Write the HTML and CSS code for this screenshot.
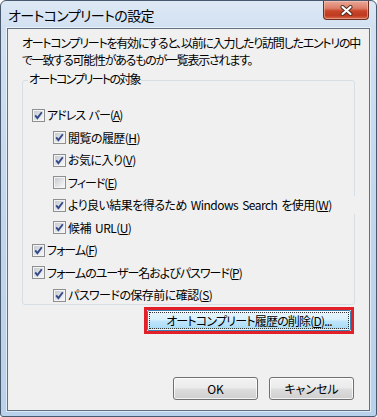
FILE: index.html
```html
<!DOCTYPE html>
<html lang="ja">
<head>
    <meta charset="UTF-8">
    <meta name="viewport" content="width=device-width, initial-scale=1.0">
    <title>オートコンプリートの設定</title>
    <link rel="stylesheet" href="styles.css">
</head>
<body>

    <svg class="defs" width="0" height="0">
        <defs>
            <linearGradient id="box-fill" x1="0" y1="0" x2="1" y2="1">
                <stop offset="0" stop-color="#c6cbd2"/>
                <stop offset="1" stop-color="#f7f7f7"/>
            </linearGradient>
            <symbol id="box" viewBox="0 0 13 13">
                <rect x="0.5" y="0.5" width="12" height="12" fill="#f4f4f4" stroke="#8e8f8f"/>
                <rect x="2" y="2" width="9" height="9" fill="url(#box-fill)"/>
            </symbol>
            <symbol id="box-checked" viewBox="0 0 13 13">
                <use href="#box"/>
                <path d="M3.2 6.4 L5.4 9.1 L9.8 3.3" fill="none" stroke="#34498a" stroke-width="1.9"/>
            </symbol>
        </defs>
    </svg>

    <div class="window">
        <div class="titlebar">
            <span class="title">オートコンプリートの設定</span>
            <span class="close">
                <svg width="13" height="11" viewBox="0 0 13 11">
                    <path d="M2.5 2 L10.5 9 M10.5 2 L2.5 9" stroke="#4a2a22" stroke-width="4" stroke-linecap="round"/>
                    <path d="M2.5 2 L10.5 9 M10.5 2 L2.5 9" stroke="#ffffff" stroke-width="2.2" stroke-linecap="round"/>
                </svg>
            </span>
        </div>

        <div class="client">
            <p class="desc">オートコンプリートを有効にすると、以前に入力したり訪問したエントリの中<br>で一致する可能性があるものが一覧表示されます。</p>

            <div class="group">
                <span class="group-title">オートコンプリートの対象</span>
                <ul class="options">
                    <li class="opt"><svg class="cb"><use href="#box-checked"/></svg><span class="kana">アドレス バー(<u>A</u>)</span></li>
                    <li class="opt sub"><svg class="cb"><use href="#box-checked"/></svg><span>閲覧の履歴(<u>H</u>)</span></li>
                    <li class="opt sub"><svg class="cb"><use href="#box-checked"/></svg><span>お気に入り(<u>V</u>)</span></li>
                    <li class="opt sub"><svg class="cb"><use href="#box"/></svg><span class="kana">フィード(<u>E</u>)</span></li>
                    <li class="opt sub wide"><svg class="cb"><use href="#box-checked"/></svg><span>より良い結果を得るため Windows Search を使用(<u>W</u>)</span></li>
                    <li class="opt sub"><svg class="cb"><use href="#box-checked"/></svg><span>候補 URL(<u>U</u>)</span></li>
                    <li class="opt"><svg class="cb"><use href="#box-checked"/></svg><span class="kana">フォーム(<u>F</u>)</span></li>
                    <li class="opt"><svg class="cb"><use href="#box-checked"/></svg><span class="kana">フォームのユーザー名およびパスワード(<u>P</u>)</span></li>
                    <li class="opt sub"><svg class="cb"><use href="#box-checked"/></svg><span>パスワードの保存前に確認(<u>S</u>)</span></li>
                </ul>
            </div>

            <div class="delete-row">
                <div class="highlight">
                    <button class="btn btn-hot">オートコンプリート履歴の削除(<u>D</u>)...</button>
                </div>
            </div>

            <div class="footer">
                <button class="btn">OK</button>
                <button class="btn">キャンセル</button>
            </div>
        </div>
    </div>

</body>
</html>
```

FILE: styles.css
```css
* {
    box-sizing: border-box;
    margin: 0;
    padding: 0;
}

body {
    width: 377px;
    height: 417px;
    overflow: hidden;
    background: #ffffff;
    font-family: "Noto Sans CJK JP", "Noto Sans", sans-serif;
    font-size: 12px;
    font-feature-settings: "palt";
    color: #000;
}

.defs {
    position: absolute;
    width: 0;
    height: 0;
}

.window {
    width: 377px;
    height: 417px;
    display: flex;
    flex-direction: column;
    border: 1px solid #4a5a6e;
    border-radius: 6px 6px 3px 3px;
    background: linear-gradient(to bottom, #dde8f4 0, #d2e1f2 27px, #c3d7ee 45%, #bad1eb 100%);
}

/* Title bar */
.titlebar {
    height: 27px;
    display: flex;
    justify-content: space-between;
    align-items: flex-start;
    padding: 0 7px 0 7px;
}

.title {
    margin-top: 4px;
    font-size: 14px;
    line-height: 20px;
    letter-spacing: -0.6px;
    color: #000;
}

.close {
    width: 46px;
    height: 19px;
    display: flex;
    align-items: center;
    justify-content: center;
    border: 1px solid #6e2d21;
    border-top: none;
    border-radius: 0 0 4px 4px;
    background: linear-gradient(to bottom, #e8a898 0%, #dc7f68 40%, #c9452a 55%, #bf3a1f 80%, #d86a4a 100%);
    box-shadow: inset 0 0 0 1px rgba(255, 210, 200, 0.45);
}

/* Client area */
.client {
    flex: 1;
    display: flex;
    flex-direction: column;
    margin: 0 6px 5px 6px;
    border: 1px solid #627182;
    background: #f0f0f0;
    box-shadow: 0 0 0 1px rgba(255, 255, 255, 0.55);
}

.desc {
    padding: 5px 14px 0 14px;
    line-height: 17px;
    letter-spacing: -1.25px;
    white-space: nowrap;
}

/* Group box */
.group {
    display: flex;
    flex-direction: column;
    align-items: flex-start;
    margin: 12px 14px 0 14px;
    border: 1px solid #d5dfe5;
    border-radius: 3px;
}

.group-title {
    margin: -11px 0 0 5px;
    padding: 0 1px;
    line-height: 17px;
    letter-spacing: -1.7px;
    background: #f0f0f0;
}

.options {
    list-style: none;
    align-self: stretch;
    display: flex;
    flex-direction: column;
    gap: 4.5px;
    padding-top: 19px;
}

.opt {
    height: 18px;
    display: flex;
    align-items: center;
    gap: 2px;
    padding-left: 9px;
    line-height: 18px;
    letter-spacing: -0.55px;
    word-spacing: 2px;
    white-space: nowrap;
}

.opt .kana {
    letter-spacing: -1px;
}

.opt.sub {
    padding-left: 30px;
}

.opt.wide {
    margin-right: -5px;
    background: #f0f0f0;
}

.cb {
    width: 13px;
    height: 13px;
    flex: 0 0 13px;
}

/* Buttons */
.btn {
    width: 85px;
    height: 23px;
    border: 1px solid #707070;
    border-radius: 3px;
    background: linear-gradient(to bottom, #f2f2f2 0%, #ebebeb 48%, #dddddd 52%, #cfcfcf 100%);
    box-shadow: inset 0 0 0 1px rgba(255, 255, 255, 0.75);
    font-family: inherit;
    font-size: 12px;
    font-feature-settings: "palt";
    color: #000;
    line-height: 20px;
    white-space: nowrap;
}

.delete-row {
    display: flex;
    justify-content: flex-end;
    margin: 2px 15px 0 0;
}

.highlight {
    display: flex;
    border: 3px solid #e2202a;
}

.btn-hot {
    width: 204px;
    height: 21px;
    border-color: #3c7fb1;
    border-radius: 2px;
    background: linear-gradient(to bottom, #eaf6fd 0%, #d9f0fc 48%, #bee6fd 52%, #a7d9f5 100%);
    outline: 1px dotted #333;
    outline-offset: -3px;
    line-height: 18px;
    letter-spacing: -0.8px;
}

.footer {
    margin-top: auto;
    display: flex;
    justify-content: flex-end;
    gap: 11px;
    padding: 0 15px 10px 0;
}
```
